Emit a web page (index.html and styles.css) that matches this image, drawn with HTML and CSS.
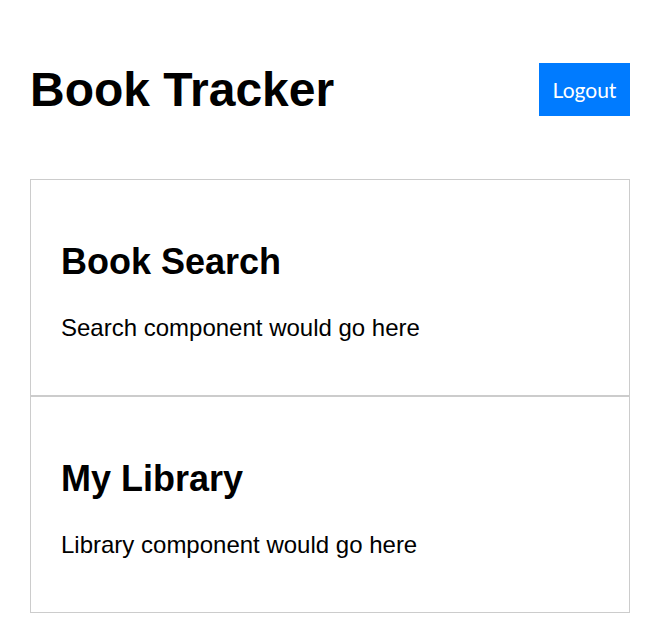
FILE: index.html
```html
<!DOCTYPE html>
<html>
<head>
<meta charset="utf-8">
<link rel="stylesheet" href="styles.css">
</head>
<body>
<div class="app">
  <header class="header">
    <h1 class="title">Book Tracker</h1>
    <button class="logout">Logout</button>
  </header>
  <section class="card">
    <h2 class="card-title">Book Search</h2>
    <p class="card-text">Search component would go here</p>
  </section>
  <section class="card">
    <h2 class="card-title">My Library</h2>
    <p class="card-text">Library component would go here</p>
  </section>
</div>
</body>
</html>
```
FILE: styles.css
```css
html, body {
  margin: 0;
  padding: 0;
  background: #fff;
}
body {
  font-family: "Liberation Sans", Arial, sans-serif;
  color: #000;
}
.app {
  padding: 30px;
}
.header {
  display: flex;
  justify-content: space-between;
  align-items: center;
  margin-bottom: 30px;
}
.title {
  font-size: 48px;
  font-weight: bold;
  margin: 32px 0;
}
.logout {
  background: #007bff;
  color: #fff;
  border: none;
  font-family: Lato, sans-serif;
  font-size: 21px;
  padding: 0;
  height: 53px;
  width: 91px;
  cursor: pointer;
}
.card {
  border: 1px solid #ccc;
  padding: 30px;
}
.card-title {
  font-size: 36px;
  font-weight: bold;
  margin: 31px 0;
}
.card-text {
  font-size: 24px;
  margin: 0 0 23px;
}
```
